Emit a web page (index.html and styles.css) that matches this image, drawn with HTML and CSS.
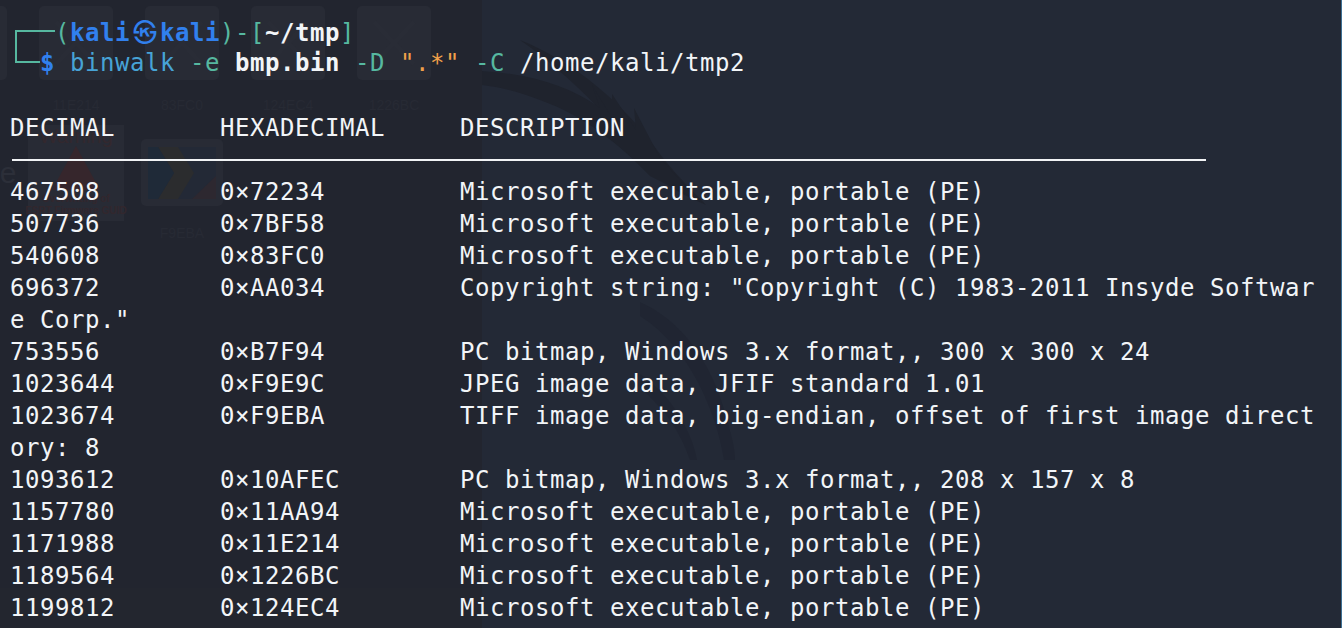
FILE: index.html
```html
<!DOCTYPE html>
<html lang="en">
<head>
<meta charset="utf-8">
<title>binwalk - kali terminal</title>
<link rel="stylesheet" href="styles.css">
</head>
<body>
<svg class="wallpaper" width="1342" height="628" viewBox="0 0 1342 628" aria-hidden="true">
  <rect class="wp-right" x="482" y="0" width="859" height="628"/>
  <rect class="wp-edge" x="1341" y="0" width="1" height="628"/>
  <rect class="wp-band" x="0" y="588" width="482" height="40"/>
  <g class="tiles">
    <rect x="-30" y="6" width="37" height="74" rx="5"/>
    <rect x="39" y="6" width="74" height="74" rx="5"/>
    <rect x="145" y="6" width="74" height="74" rx="5"/>
    <rect x="251" y="6" width="74" height="74" rx="5"/>
    <rect x="357" y="6" width="74" height="74" rx="5"/>
    <rect x="28" y="125" width="96" height="96"/>
    <rect x="141" y="139" width="82" height="67" rx="5"/>
  </g>
  <g class="tile-marks">
    <path d="M56 22 96 64M96 22 56 64"/>
    <path d="M162 22 202 64M202 22 162 64"/>
    <path d="M268 22 308 64M308 22 268 64"/>
    <path d="M374 22 414 64M414 22 374 64"/>
  </g>
  <g class="labels">
    <text x="76" y="110">11E214</text>
    <text x="182" y="110">83FC0</text>
    <text x="288" y="110">124EC4</text>
    <text x="394" y="110">1226BC</text>
    <text x="182" y="238">F9EBA</text>
    <text class="big" x="8" y="183">e</text>
  </g>
  <text class="warn-title" x="76" y="143">Warning</text>
  <path class="warn" d="M76 146 100 190H52Z"/>
  <text class="warn-note" x="76" y="202">Overwriting of</text>
  <text class="warn-note" x="76" y="214">ESRT Firmware GUID</text>
  <rect class="warn-glass" x="148" y="147" width="68" height="52"/>
  <path class="play-y" d="M158 147H178L194 173 178 199H158L174 173Z"/>
  <path class="play-b" d="M148 147H158L174 173 158 199H148Z"/>
  <path class="play-r" d="M192 199 216 176V199Z"/>
  <g class="dragon">
    <path d="M520 40C575 62 625 105 657 150 672 171 690 188 706 205 690 198 672 190 654 174 622 130 574 78 520 40Z"/>
    <path d="M482 71C530 74 570 86 600 108L592 85 612 118 612 94 636 130 634 108 660 158C680 180 690 190 694 198L650 176C620 145 585 116 540 100 520 92 500 87 482 85Z"/>
  </g>
  <g class="dragon-low">
    <path d="M640 302C680 320 712 360 727 420 733 440 735 452 735 460H724C716 410 688 346 640 316Z"/>
    <path d="M640 374C660 388 674 404 686 428 692 440 695 450 697 460H690C680 430 662 406 640 388Z"/>
  </g>
</svg>

<main class="terminal">
  <section class="prompt">
    <svg class="bracket" width="40" height="34" viewBox="0 0 40 34" aria-hidden="true"><path d="M40 1H1V32H25"/></svg>
    <div class="prompt-lines">
      <div class="line first"><span class="teal">(</span><b class="blue">kali<span class="at">㉿</span>kali</b><span class="teal">)-[</span><b>~/tmp</b><span class="teal">]</span></div>
      <div class="line"><b class="blue">$</b> <span class="cmd">binwalk</span> <span class="teal">-e</span> <b>bmp.bin</b> <span class="teal">-D</span> <span class="orange">".*"</span> <span class="teal">-C</span> /home/kali/tmp2</div>
    </div>
  </section>

  <div class="blank"></div>

  <div class="row"><span>DECIMAL</span><span>HEXADECIMAL</span><span>DESCRIPTION</span></div>
  <div class="rule-row"><div class="rule"></div></div>

  <div class="row"><span>467508</span><span>0×72234</span><span>Microsoft executable, portable (PE)</span></div>
  <div class="row"><span>507736</span><span>0×7BF58</span><span>Microsoft executable, portable (PE)</span></div>
  <div class="row"><span>540608</span><span>0×83FC0</span><span>Microsoft executable, portable (PE)</span></div>
  <div class="row"><span>696372</span><span>0×AA034</span><span>Copyright string: "Copyright (C) 1983-2011 Insyde Softwar</span></div>
  <div class="line">e Corp."</div>
  <div class="row"><span>753556</span><span>0×B7F94</span><span>PC bitmap, Windows 3.x format,, 300 x 300 x 24</span></div>
  <div class="row"><span>1023644</span><span>0×F9E9C</span><span>JPEG image data, JFIF standard 1.01</span></div>
  <div class="row"><span>1023674</span><span>0×F9EBA</span><span>TIFF image data, big-endian, offset of first image direct</span></div>
  <div class="line">ory: 8</div>
  <div class="row"><span>1093612</span><span>0×10AFEC</span><span>PC bitmap, Windows 3.x format,, 208 x 157 x 8</span></div>
  <div class="row"><span>1157780</span><span>0×11AA94</span><span>Microsoft executable, portable (PE)</span></div>
  <div class="row"><span>1171988</span><span>0×11E214</span><span>Microsoft executable, portable (PE)</span></div>
  <div class="row"><span>1189564</span><span>0×1226BC</span><span>Microsoft executable, portable (PE)</span></div>
  <div class="row"><span>1199812</span><span>0×124EC4</span><span>Microsoft executable, portable (PE)</span></div>
</main>
</body>
</html>
```

FILE: styles.css
```css
* { box-sizing: border-box; }

html, body {
  margin: 0;
  width: 1342px;
  height: 628px;
  overflow: hidden;
}

body {
  position: relative;
  background: #22252f;
  color: #f2f5f8;
  font-family: "DejaVu Sans Mono", "Liberation Mono", monospace;
  font-size: 24px;
  letter-spacing: 0.55px;
}

/* Desktop showing through the translucent terminal */
.wallpaper { position: absolute; inset: 0; }
.wp-right { fill: #232936; }
.wp-edge { fill: #3d6f93; }
.wp-band { fill: #23262f; }
.tiles rect { fill: #282b35; }
.tile-marks path { fill: none; stroke: #292c36; stroke-width: 5; }
.labels text {
  fill: #272a34;
  font-family: "Liberation Sans", sans-serif;
  font-size: 14px;
  letter-spacing: 0;
  text-anchor: middle;
}
.labels .big { font-size: 30px; fill: #2c2f39; }
.warn-title {
  fill: #33282e;
  font-family: "Liberation Sans", sans-serif;
  font-size: 20px;
  letter-spacing: 0;
  text-anchor: middle;
}
.warn-note {
  fill: #32272d;
  font-family: "Liberation Sans", sans-serif;
  font-size: 10px;
  font-weight: 700;
  letter-spacing: 0;
  text-anchor: middle;
}
.warn { fill: #36262c; }
.warn-glass { fill: #232936; }
.play-y { fill: #2b2c2e; }
.play-b { fill: #1f2a38; }
.play-r { fill: #2d2830; }
.dragon path { fill: #1f232d; }
.dragon-low path { fill: #202532; }

/* Terminal text, on a 15 × 32 px cell grid */
.terminal {
  position: relative;
  padding: 15px 0 0 10px;
}

.line, .row, .blank, .rule-row {
  height: 32px;
  line-height: 32px;
  white-space: pre;
}

.blank { height: 33px; }

.row {
  display: grid;
  grid-template-columns: 210px 240px auto;
}

.rule-row {
  display: flex;
  align-items: center;
  padding-left: 2px;
}

.rule {
  width: 1194px;
  height: 2px;
  background: #f1f3f5;
}

.prompt {
  display: flex;
  align-items: flex-start;
}

.bracket {
  flex: none;
  margin: 15px -15px 0 5px;
}
.bracket path {
  fill: none;
  stroke: #56b8a0;
  stroke-width: 2;
}

.prompt-lines { min-width: 0; }
.first { padding-left: 15px; }

b { font-weight: 700; }
.blue { color: #3180ee; }
.teal { color: #56b8a0; }
.cmd { color: #47a3d6; }
.orange { color: #f0a04a; }
.at {
  display: inline-block;
  width: 30px;
  text-align: center;
  font-family: "Noto Sans CJK SC", sans-serif;
  letter-spacing: 0;
}
```
